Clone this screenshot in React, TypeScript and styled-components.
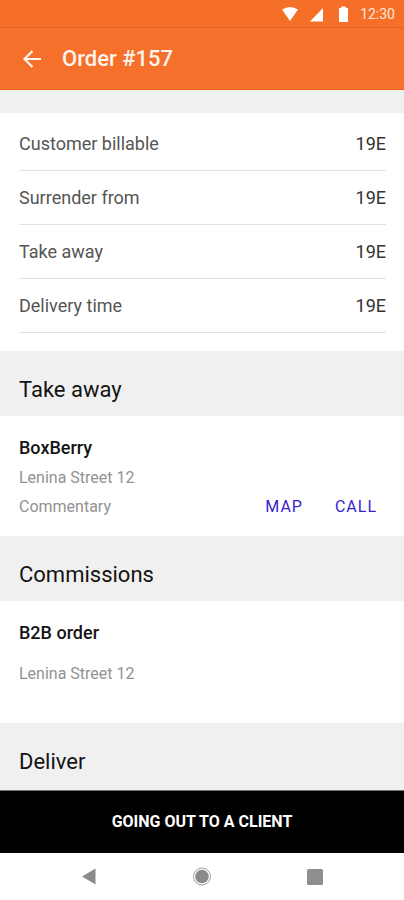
import React from "react";
import styled, { createGlobalStyle } from "styled-components";

const GlobalStyle = createGlobalStyle`
  *, *::before, *::after { box-sizing: border-box; }
  body {
    margin: 0;
    background: #fff;
    color: #141414;
    font-family: Roboto, "Liberation Sans", sans-serif;
  }
  button { font: inherit; border: 0; padding: 0; background: none; cursor: pointer; }
  h1, h2, h3, p, dl, dd { margin: 0; font-weight: 400; }
  svg { display: block; }
`;

const Screen = styled.div`
  display: flex;
  flex-direction: column;
  min-height: 100vh;
  background: #fff;
`;

const StatusBar = styled.div`
  display: flex;
  justify-content: flex-end;
  align-items: center;
  height: 28px;
  padding: 0 9px;
  background: #f56f28;
  border-bottom: 1px solid #e2651f;
  color: #ffe9dc;
  font-size: 14px;
  line-height: 20px;
`;

const AppBar = styled.header`
  display: flex;
  align-items: center;
  gap: 16px;
  height: 62px;
  padding: 0 18px;
  background: #f5702a;
  border-bottom: 1px solid #ee5f14;
  color: #fff4ec;
`;

const BackButton = styled.button`
  width: 28px;
  height: 28px;
  color: inherit;
`;

const Title = styled.h1`
  font-size: 22px;
  line-height: 28px;
  font-weight: 500;
`;

const Main = styled.main`
  flex: 1;
  display: flex;
  flex-direction: column;
  padding-top: 23px;
  background: #f0f0f0;
`;

const Summary = styled.dl`
  padding: 4px 18px 18px 19px;
  background: #fff;
`;

const SummaryRow = styled.div`
  display: flex;
  justify-content: space-between;
  align-items: center;
  height: 54px;
  border-bottom: 1px solid #e2e2e2;
  font-size: 18px;
  line-height: 24px;
`;

const SummaryLabel = styled.dt`
  color: #555;
`;

const SummaryValue = styled.dd`
  color: #333;
`;

const SectionTitle = styled.h2`
  padding: 25px 18px 12px 19px;
  font-size: 22px;
  line-height: 28px;
`;

const Card = styled.section<{ $gap: number; $bottom: number }>`
  display: flex;
  flex-direction: column;
  gap: ${(p) => p.$gap}px;
  padding: 19px 18px ${(p) => p.$bottom}px 19px;
  background: #fff;
`;

const CardTitle = styled.h3`
  font-size: 18px;
  line-height: 26px;
  font-weight: 500;
`;

const Muted = styled.p`
  color: #929292;
  font-size: 16px;
  line-height: 24px;
`;

const CardFooter = styled.div`
  display: flex;
  justify-content: space-between;
  align-items: center;
`;

const Actions = styled.div`
  display: flex;
  gap: 32px;
  padding-right: 9px;
`;

const TextButton = styled.button`
  color: #3725cc;
  font-size: 16px;
  line-height: 24px;
  letter-spacing: 1px;
`;

const PrimaryButton = styled.button`
  height: 63px;
  border-top: 1px solid #777;
  background: #000;
  color: #fff;
  font-size: 16px;
  line-height: 24px;
  font-weight: 700;
`;

const NavBar = styled.nav`
  display: flex;
  justify-content: center;
  gap: 85px;
  padding: 9px 0 10px;
  background: #fff;
`;

const NavButton = styled.button`
  width: 28px;
  height: 28px;
`;

const rows = [
  { label: "Customer billable", value: "19E" },
  { label: "Surrender from", value: "19E" },
  { label: "Take away", value: "19E" },
  { label: "Delivery time", value: "19E" },
];

export default function App() {
  return (
    <>
      <GlobalStyle />
      <Screen>
        <StatusBar>
          <svg width="78" height="18" viewBox="0 0 78 18" fill="#fff" aria-hidden="true">
            <path d="M0 4.5Q8 -.5 16 4.5L8 16Z" />
            <path d="M28 16.5L41 3V16.5Z" />
            <path d="M57.500 3.500h2V2h4v1.500h2V16.500h-8z" stroke="#fff" strokeLinejoin="round" />
          </svg>
          <time>12:30</time>
        </StatusBar>

        <AppBar>
          <BackButton type="button" aria-label="Back">
            <svg width="28" height="28" viewBox="0 0 28 28" fill="none" stroke="currentColor" strokeWidth="2.200">
              <path d="M23 14H7M14.500 6L6.500 14l8 8" />
            </svg>
          </BackButton>
          <Title>Order #157</Title>
        </AppBar>

        <Main>
          <Summary>
            {rows.map((row) => (
              <SummaryRow key={row.label}>
                <SummaryLabel>{row.label}</SummaryLabel>
                <SummaryValue>{row.value}</SummaryValue>
              </SummaryRow>
            ))}
          </Summary>

          <SectionTitle>Take away</SectionTitle>
          <Card $gap={5} $bottom={17}>
            <CardTitle>BoxBerry</CardTitle>
            <Muted>Lenina Street 12</Muted>
            <CardFooter>
              <Muted>Commentary</Muted>
              <Actions>
                <TextButton type="button">MAP</TextButton>
                <TextButton type="button">CALL</TextButton>
              </Actions>
            </CardFooter>
          </Card>

          <SectionTitle>Commissions</SectionTitle>
          <Card $gap={16} $bottom={37}>
            <CardTitle>B2B order</CardTitle>
            <Muted>Lenina Street 12</Muted>
          </Card>

          <SectionTitle>Deliver</SectionTitle>
        </Main>

        <PrimaryButton type="button">GOING OUT TO A CLIENT</PrimaryButton>

        <NavBar aria-label="System">
          <NavButton type="button" aria-label="Back">
            <svg width="28" height="28" viewBox="0 0 28 28">
              <path d="M7 14.500L20.500 6.500v16z" fill="#8b8b8b" />
            </svg>
          </NavButton>
          <NavButton type="button" aria-label="Home">
            <svg width="28" height="28" viewBox="0 0 28 28">
              <circle cx="14" cy="14.500" r="8.500" fill="none" stroke="#a0a0a0" />
              <circle cx="14" cy="14.500" r="6.800" fill="#8b8b8b" />
            </svg>
          </NavButton>
          <NavButton type="button" aria-label="Recent apps">
            <svg width="28" height="28" viewBox="0 0 28 28">
              <rect x="6" y="7" width="16" height="16" rx="1.500" fill="#8e8e8e" />
            </svg>
          </NavButton>
        </NavBar>
      </Screen>
    </>
  );
}
